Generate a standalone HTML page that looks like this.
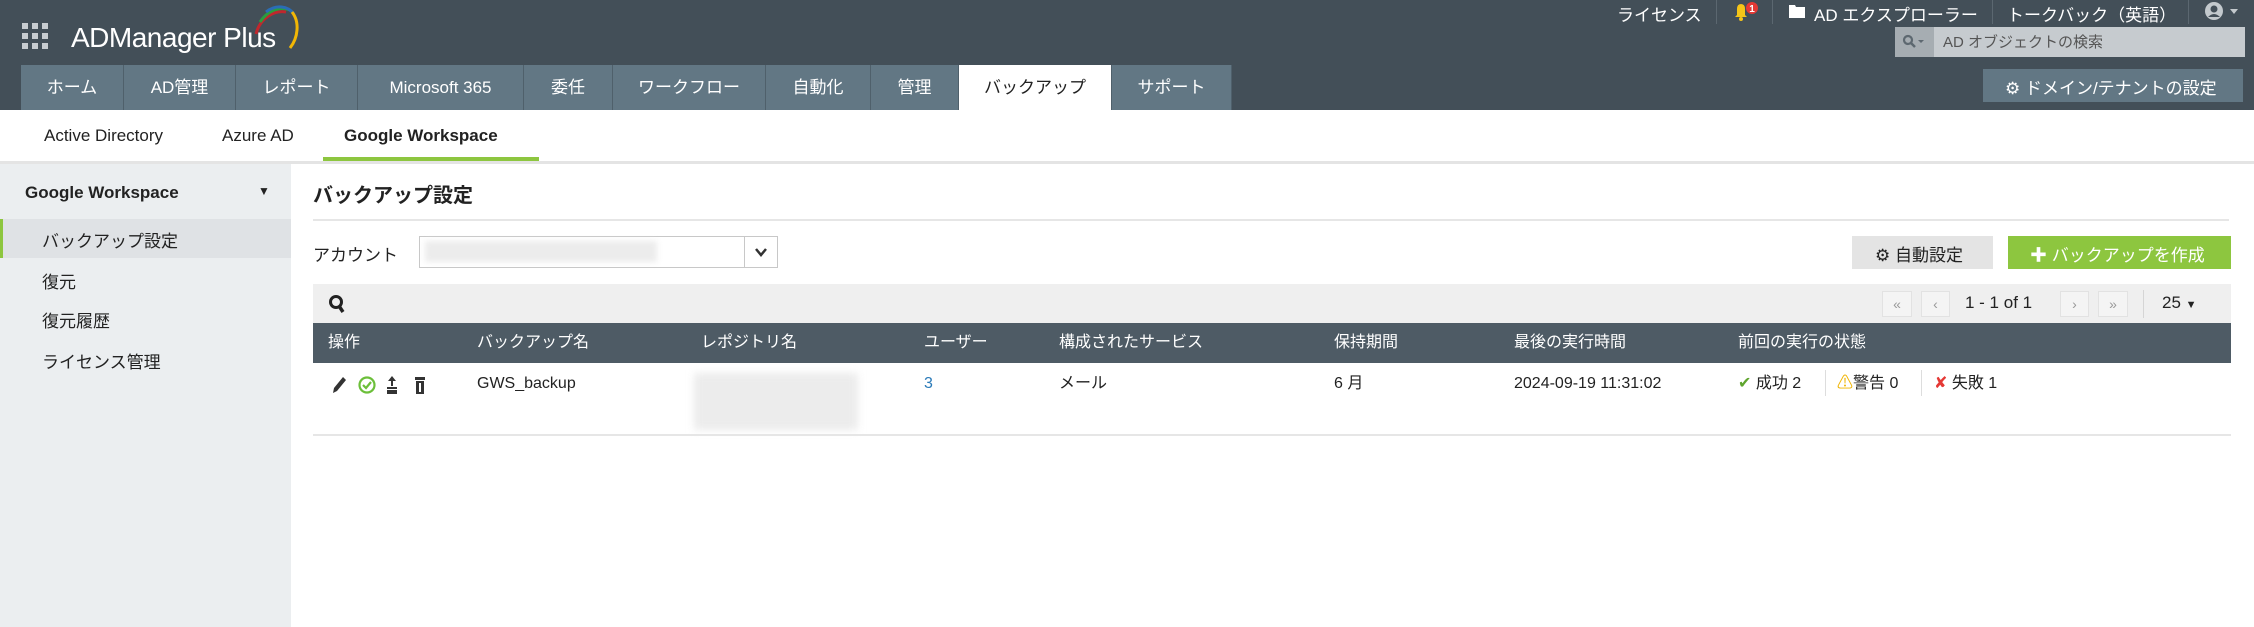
<!DOCTYPE html>
<html><head><meta charset="utf-8"><style>
*{margin:0;padding:0;box-sizing:border-box}
body{width:2254px;height:627px;overflow:hidden;background:#fff;font-family:"Liberation Sans","Noto Sans CJK JP",sans-serif;color:#222;position:relative;font-size:16px}
.a{position:absolute;white-space:nowrap}
#hdr{position:absolute;left:0;top:0;width:2254px;height:110px;background:#434f58}
.tab{position:absolute;top:65px;height:45px;background:#627784;color:#fff;font-size:17px;line-height:45px;text-align:center;border-right:1px solid #4f606b}
.w{color:#fff}
.sep{position:absolute;width:1px;background:#5b6770;top:0;height:24px}
.th{position:absolute;top:323px;color:#fff;font-size:16px;line-height:40px}
.td{position:absolute;top:372px;font-size:16px;line-height:24px}
.pb{position:absolute;top:291px;height:26px;border:1px solid #e2e2e2;background:#f4f4f4;color:#999;font-size:14px;text-align:center;line-height:24px}
</style></head><body>
<div id="hdr"></div>
<!-- grid icon -->
<svg class="a" style="left:22px;top:23px" width="28" height="28"><g fill="#c8cdd1"><rect x="0" y="0" width="6" height="6"/><rect x="10" y="0" width="6" height="6"/><rect x="20" y="0" width="6" height="6"/><rect x="0" y="10" width="6" height="6"/><rect x="10" y="10" width="6" height="6"/><rect x="20" y="10" width="6" height="6"/><rect x="0" y="20" width="6" height="6"/><rect x="10" y="20" width="6" height="6"/><rect x="20" y="20" width="6" height="6"/></g></svg>
<div class="a w" style="left:71px;top:22px;font-size:28px;letter-spacing:-0.5px">ADManager Plus</div>
<svg class="a" style="left:250px;top:4px" width="52" height="46"><path d="M6 30 C10 14 24 6 36 8" stroke="#c0272d" stroke-width="3" fill="none"/><path d="M10 18 C18 6 30 2 40 6" stroke="#2a9d3f" stroke-width="3" fill="none"/><path d="M16 8 C26 0 38 2 44 10" stroke="#2a6db5" stroke-width="3" fill="none"/><path d="M42 8 C50 18 48 34 40 44" stroke="#f2b705" stroke-width="3" fill="none"/></svg>

<div class="a w" style="left:1617px;top:1px;font-size:17px">ライセンス</div>
<div class="sep" style="left:1716px"></div>
<svg class="a" style="left:1731px;top:2px" width="32" height="20"><path d="M4 15 L6 13 L6 7 Q6 2 10 2 Q14 2 14 7 L14 13 L16 15 Z" fill="#f5c518"/><circle cx="10" cy="17" r="2" fill="#f5c518"/><circle cx="21" cy="6" r="6" fill="#e53935"/><text x="21" y="10" fill="#fff" font-size="10" font-weight="bold" text-anchor="middle" font-family="Liberation Sans">1</text></svg>
<div class="sep" style="left:1772px"></div>
<svg class="a" style="left:1789px;top:5px" width="16" height="13"><path d="M0 0 H6 L7 2 H16 V13 H0Z" fill="#fff"/></svg>
<div class="a w" style="left:1814px;top:1px;font-size:17px">AD エクスプローラー</div>
<div class="sep" style="left:1992px"></div>
<div class="a w" style="left:2007px;top:1px;font-size:17px">トークバック（英語）</div>
<div class="sep" style="left:2188px"></div>
<svg class="a" style="left:2204px;top:1px" width="40" height="20"><circle cx="10" cy="10" r="9" fill="#c3c9cd"/><circle cx="10" cy="8" r="3.5" fill="#434f58"/><path d="M4 16 Q10 10 16 16" fill="#434f58"/><path d="M26 8 H34 L30 13Z" fill="#c3c9cd"/></svg>

<div class="a" style="left:1895px;top:27px;width:350px;height:30px;background:#c6cbcf"></div>
<div class="a" style="left:1895px;top:27px;width:39px;height:30px;background:#a6adb2"></div>
<svg class="a" style="left:1902px;top:34px" width="24" height="16"><circle cx="6" cy="6" r="4" stroke="#5d6870" stroke-width="2.2" fill="none"/><path d="M9 9 L13 13" stroke="#5d6870" stroke-width="2.5"/><path d="M16 6 H22 L19 9Z" fill="#5d6870"/></svg>
<div class="a" style="left:1943px;top:31px;font-size:15px;color:#555">AD オブジェクトの検索</div>

<div class="a" style="left:1983px;top:69px;width:260px;height:33px;background:#627784"></div>
<div class="a w" style="left:2005px;top:74px;font-size:17px">⚙ ドメイン/テナントの設定</div>

<div class="tab" style="left:21px;width:103px">ホーム</div>
<div class="tab" style="left:124px;width:112px">AD管理</div>
<div class="tab" style="left:236px;width:122px">レポート</div>
<div class="tab" style="left:358px;width:166px">Microsoft 365</div>
<div class="tab" style="left:524px;width:89px">委任</div>
<div class="tab" style="left:613px;width:153px">ワークフロー</div>
<div class="tab" style="left:766px;width:105px">自動化</div>
<div class="tab" style="left:871px;width:88px">管理</div>
<div class="tab" style="left:959px;width:153px;background:#fff;color:#222">バックアップ</div>
<div class="tab" style="left:1112px;width:120px">サポート</div>

<div class="a" style="left:44px;top:126px;font-size:17px">Active Directory</div>
<div class="a" style="left:222px;top:126px;font-size:17px">Azure AD</div>
<div class="a" style="left:344px;top:126px;font-size:17px;font-weight:bold">Google Workspace</div>
<div class="a" style="left:323px;top:157px;width:216px;height:4px;background:#8dc63f"></div>
<div class="a" style="left:0;top:161px;width:2254px;height:3px;background:#e4e4e4"></div>

<div class="a" style="left:0;top:164px;width:291px;height:463px;background:#ebeef0"></div>
<div class="a" style="left:25px;top:183px;font-size:17px;font-weight:bold">Google Workspace</div>
<div class="a" style="left:258px;top:184px;font-size:12px">▼</div>
<div class="a" style="left:0;top:219px;width:291px;height:39px;background:#dfe2e5;border-left:3px solid #8dc63f"></div>
<div class="a" style="left:42px;top:227px;font-size:17px">バックアップ設定</div>
<div class="a" style="left:42px;top:268px;font-size:17px">復元</div>
<div class="a" style="left:42px;top:307px;font-size:17px">復元履歴</div>
<div class="a" style="left:42px;top:348px;font-size:17px">ライセンス管理</div>

<div class="a" style="left:313px;top:179px;font-size:20px;font-weight:bold">バックアップ設定</div>
<div class="a" style="left:313px;top:219px;width:1916px;height:2px;background:#e6e6e6"></div>
<div class="a" style="left:313px;top:241px;font-size:17px">アカウント</div>
<div class="a" style="left:419px;top:236px;width:359px;height:32px;border:1px solid #c8c8c8;background:#fff"></div>
<div class="a" style="left:425px;top:241px;width:232px;height:21px;background:#ececec;filter:blur(3px)"></div>
<div class="a" style="left:744px;top:237px;width:1px;height:30px;background:#c8c8c8"></div>
<svg class="a" style="left:754px;top:246px" width="14" height="12"><path d="M2 3 L7 9 L12 3" stroke="#333" stroke-width="2.5" fill="none"/></svg>

<div class="a" style="left:1852px;top:236px;width:141px;height:33px;background:#e4e4e4"></div>
<div class="a" style="left:1875px;top:241px;font-size:17px">⚙ 自動設定</div>
<div class="a" style="left:2008px;top:236px;width:223px;height:33px;background:#8dc63f"></div>
<div class="a w" style="left:2030px;top:241px;font-size:17px"><b>✚</b> バックアップを作成</div>

<div class="a" style="left:313px;top:284px;width:1918px;height:39px;background:#efefef"></div>
<svg class="a" style="left:328px;top:294px" width="20" height="22"><circle cx="8" cy="8" r="5.5" stroke="#222" stroke-width="3" fill="none"/><path d="M11 12 L15 18" stroke="#222" stroke-width="3.5"/></svg>
<div class="pb" style="left:1882px;width:30px">«</div>
<div class="pb" style="left:1921px;width:29px">‹</div>
<div class="a" style="left:1965px;top:293px;font-size:17px">1 - 1 of 1</div>
<div class="pb" style="left:2060px;width:29px">›</div>
<div class="pb" style="left:2098px;width:30px">»</div>
<div class="a" style="left:2143px;top:290px;width:1px;height:28px;background:#d5d5d5"></div>
<div class="a" style="left:2162px;top:293px;font-size:17px">25 <span style="font-size:11px">▼</span></div>

<div class="a" style="left:313px;top:323px;width:1918px;height:40px;background:#4e5b65"></div>
<div class="th" style="left:328px">操作</div>
<div class="th" style="left:477px">バックアップ名</div>
<div class="th" style="left:701px">レポジトリ名</div>
<div class="th" style="left:924px">ユーザー</div>
<div class="th" style="left:1059px">構成されたサービス</div>
<div class="th" style="left:1334px">保持期間</div>
<div class="th" style="left:1514px">最後の実行時間</div>
<div class="th" style="left:1738px">前回の実行の状態</div>

<svg class="a" style="left:330px;top:374px" width="110" height="22"><path d="M3 19 L4 14 L13 3 L16 6 L7 17Z" fill="#333"/><circle cx="37" cy="11" r="7.5" stroke="#6cbf3a" stroke-width="2.2" fill="none"/><path d="M33 11 L36 14 L41 8" stroke="#6cbf3a" stroke-width="2.2" fill="none"/><path d="M62 2 L58 7 H61 V12 H63 V7 H66Z" fill="#333"/><rect x="57" y="13" width="10" height="2" fill="#333"/><rect x="57" y="16" width="10" height="4" fill="#333"/><rect x="85" y="3" width="10" height="3" fill="#333"/><rect x="86" y="7" width="8" height="13" fill="#333"/><rect x="89" y="9" width="2" height="9" fill="#fff"/></svg>
<div class="td" style="left:477px">GWS_backup</div>
<div class="a" style="left:694px;top:373px;width:164px;height:57px;background:#ececec;filter:blur(4px)"></div>
<div class="td" style="left:924px;color:#2a7ab8">3</div>
<div class="td" style="left:1059px">メール</div>
<div class="td" style="left:1334px">6 月</div>
<div class="td" style="left:1514px">2024-09-19 11:31:02</div>
<div class="td" style="left:1738px"><span style="color:#5fa52e">✔</span> 成功 2</div>
<div class="a" style="left:1825px;top:370px;width:1px;height:26px;background:#ddd"></div>
<div class="td" style="left:1837px"><span style="color:#f0b400">⚠</span>警告 0</div>
<div class="a" style="left:1921px;top:370px;width:1px;height:26px;background:#ddd"></div>
<div class="td" style="left:1934px"><span style="color:#e53935">✘</span> 失敗 1</div>
<div class="a" style="left:313px;top:434px;width:1918px;height:2px;background:#e6e6e6"></div>
</body></html>
